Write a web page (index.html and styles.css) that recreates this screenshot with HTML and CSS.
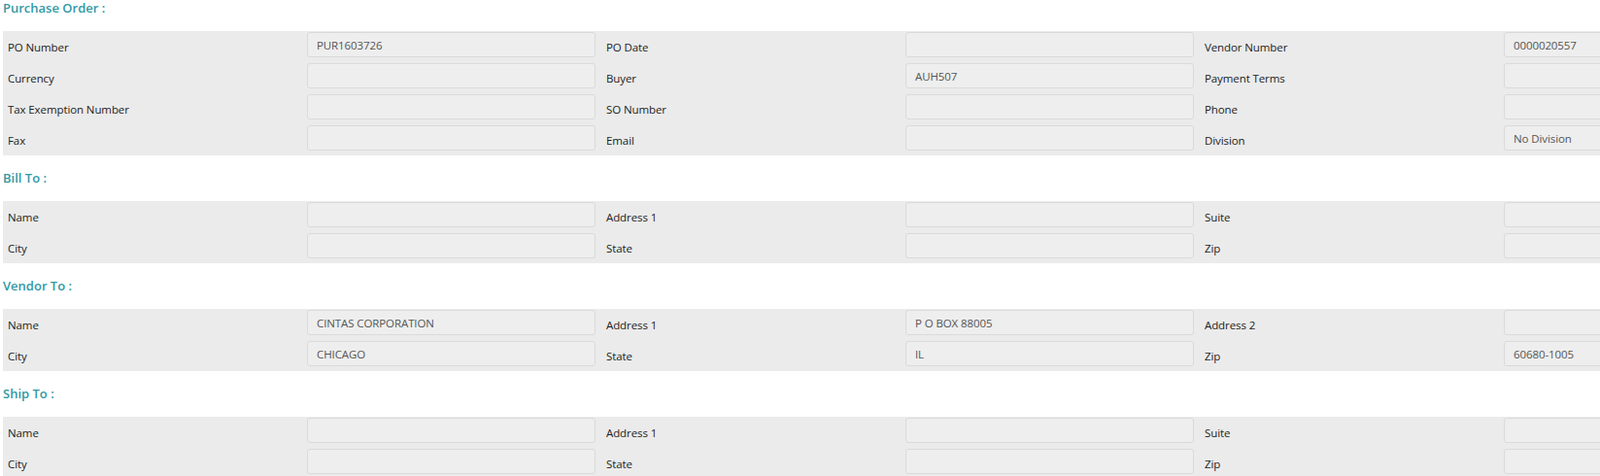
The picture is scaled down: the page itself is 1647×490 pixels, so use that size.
FILE: index.html
```html
<!DOCTYPE html>
<html>
<head>
<meta charset="utf-8">
<link rel="stylesheet" href="styles.css">
</head>
<body>
<div class="page">
  <section class="section">
    <h3 class="section-title">Purchase Order :</h3>
    <div class="panel">
      <label class="cell label">PO Number</label><div class="cell field"><input class="input" readonly value="PUR1603726"></div>
      <label class="cell label">PO Date</label><div class="cell field"><input class="input" readonly value=""></div>
      <label class="cell label">Vendor Number</label><div class="cell field"><input class="input" readonly value="0000020557"></div>

      <label class="cell label">Currency</label><div class="cell field"><input class="input" readonly value=""></div>
      <label class="cell label">Buyer</label><div class="cell field"><input class="input" readonly value="AUH507"></div>
      <label class="cell label">Payment Terms</label><div class="cell field"><input class="input" readonly value=""></div>

      <label class="cell label">Tax Exemption Number</label><div class="cell field"><input class="input" readonly value=""></div>
      <label class="cell label">SO Number</label><div class="cell field"><input class="input" readonly value=""></div>
      <label class="cell label">Phone</label><div class="cell field"><input class="input" readonly value=""></div>

      <label class="cell label">Fax</label><div class="cell field"><input class="input" readonly value=""></div>
      <label class="cell label">Email</label><div class="cell field"><input class="input" readonly value=""></div>
      <label class="cell label">Division</label><div class="cell field"><input class="input" readonly value="No Division"></div>
    </div>
  </section>

  <section class="section">
    <h3 class="section-title">Bill To :</h3>
    <div class="panel">
      <label class="cell label">Name</label><div class="cell field"><input class="input" readonly value=""></div>
      <label class="cell label">Address 1</label><div class="cell field"><input class="input" readonly value=""></div>
      <label class="cell label">Suite</label><div class="cell field"><input class="input" readonly value=""></div>

      <label class="cell label">City</label><div class="cell field"><input class="input" readonly value=""></div>
      <label class="cell label">State</label><div class="cell field"><input class="input" readonly value=""></div>
      <label class="cell label">Zip</label><div class="cell field"><input class="input" readonly value=""></div>
    </div>
  </section>

  <section class="section">
    <h3 class="section-title">Vendor To :</h3>
    <div class="panel">
      <label class="cell label">Name</label><div class="cell field"><input class="input" readonly value="CINTAS CORPORATION"></div>
      <label class="cell label">Address 1</label><div class="cell field"><input class="input" readonly value="P O BOX 88005"></div>
      <label class="cell label">Address 2</label><div class="cell field"><input class="input" readonly value=""></div>

      <label class="cell label">City</label><div class="cell field"><input class="input" readonly value="CHICAGO"></div>
      <label class="cell label">State</label><div class="cell field"><input class="input" readonly value="IL"></div>
      <label class="cell label">Zip</label><div class="cell field"><input class="input" readonly value="60680-1005"></div>
    </div>
  </section>

  <section class="section">
    <h3 class="section-title">Ship To :</h3>
    <div class="panel">
      <label class="cell label">Name</label><div class="cell field"><input class="input" readonly value=""></div>
      <label class="cell label">Address 1</label><div class="cell field"><input class="input" readonly value=""></div>
      <label class="cell label">Suite</label><div class="cell field"><input class="input" readonly value=""></div>

      <label class="cell label">City</label><div class="cell field"><input class="input" readonly value=""></div>
      <label class="cell label">State</label><div class="cell field"><input class="input" readonly value=""></div>
      <label class="cell label">Zip</label><div class="cell field"><input class="input" readonly value=""></div>
    </div>
  </section>
</div>
</body>
</html>
```

FILE: styles.css
```css
html, body {
  margin: 0;
  padding: 0;
  overflow: hidden;
  background: #ffffff;
}

body {
  font-family: "Open Sans", "Noto Sans", "Liberation Sans", sans-serif;
  color: #222222;
}

.page {
  padding: 0 0 0 3px;
  width: 1848px;
}

.section {
  margin-bottom: 15px;
}

.section-title {
  margin: 0;
  padding: 0 0 15px 0;
  font-size: 13px;
  line-height: 17px;
  font-weight: 600;
  color: #3199a5;
}

.panel {
  display: grid;
  grid-template-columns: repeat(6, 308px);
  grid-auto-rows: 32px;
  background: #ebebeb;
}

.cell {
  box-sizing: border-box;
  padding-left: 5px;
}

.label {
  font-size: 11.5px;
  letter-spacing: -0.1px;
  padding-top: 2px;
  line-height: 30px;
  color: #222222;
  white-space: nowrap;
}

.field {
  padding-right: 6px;
  padding-top: 1px;
}

.input {
  display: block;
  box-sizing: border-box;
  width: 100%;
  height: 26px;
  margin: 0;
  padding: 0 9px;
  border: 1px solid #dadada;
  border-radius: 3px;
  background: #eeeeee;
  font-family: inherit;
  font-size: 11.5px;
  letter-spacing: -0.1px;
  line-height: 24px;
  color: #555555;
  outline: none;
}
```
